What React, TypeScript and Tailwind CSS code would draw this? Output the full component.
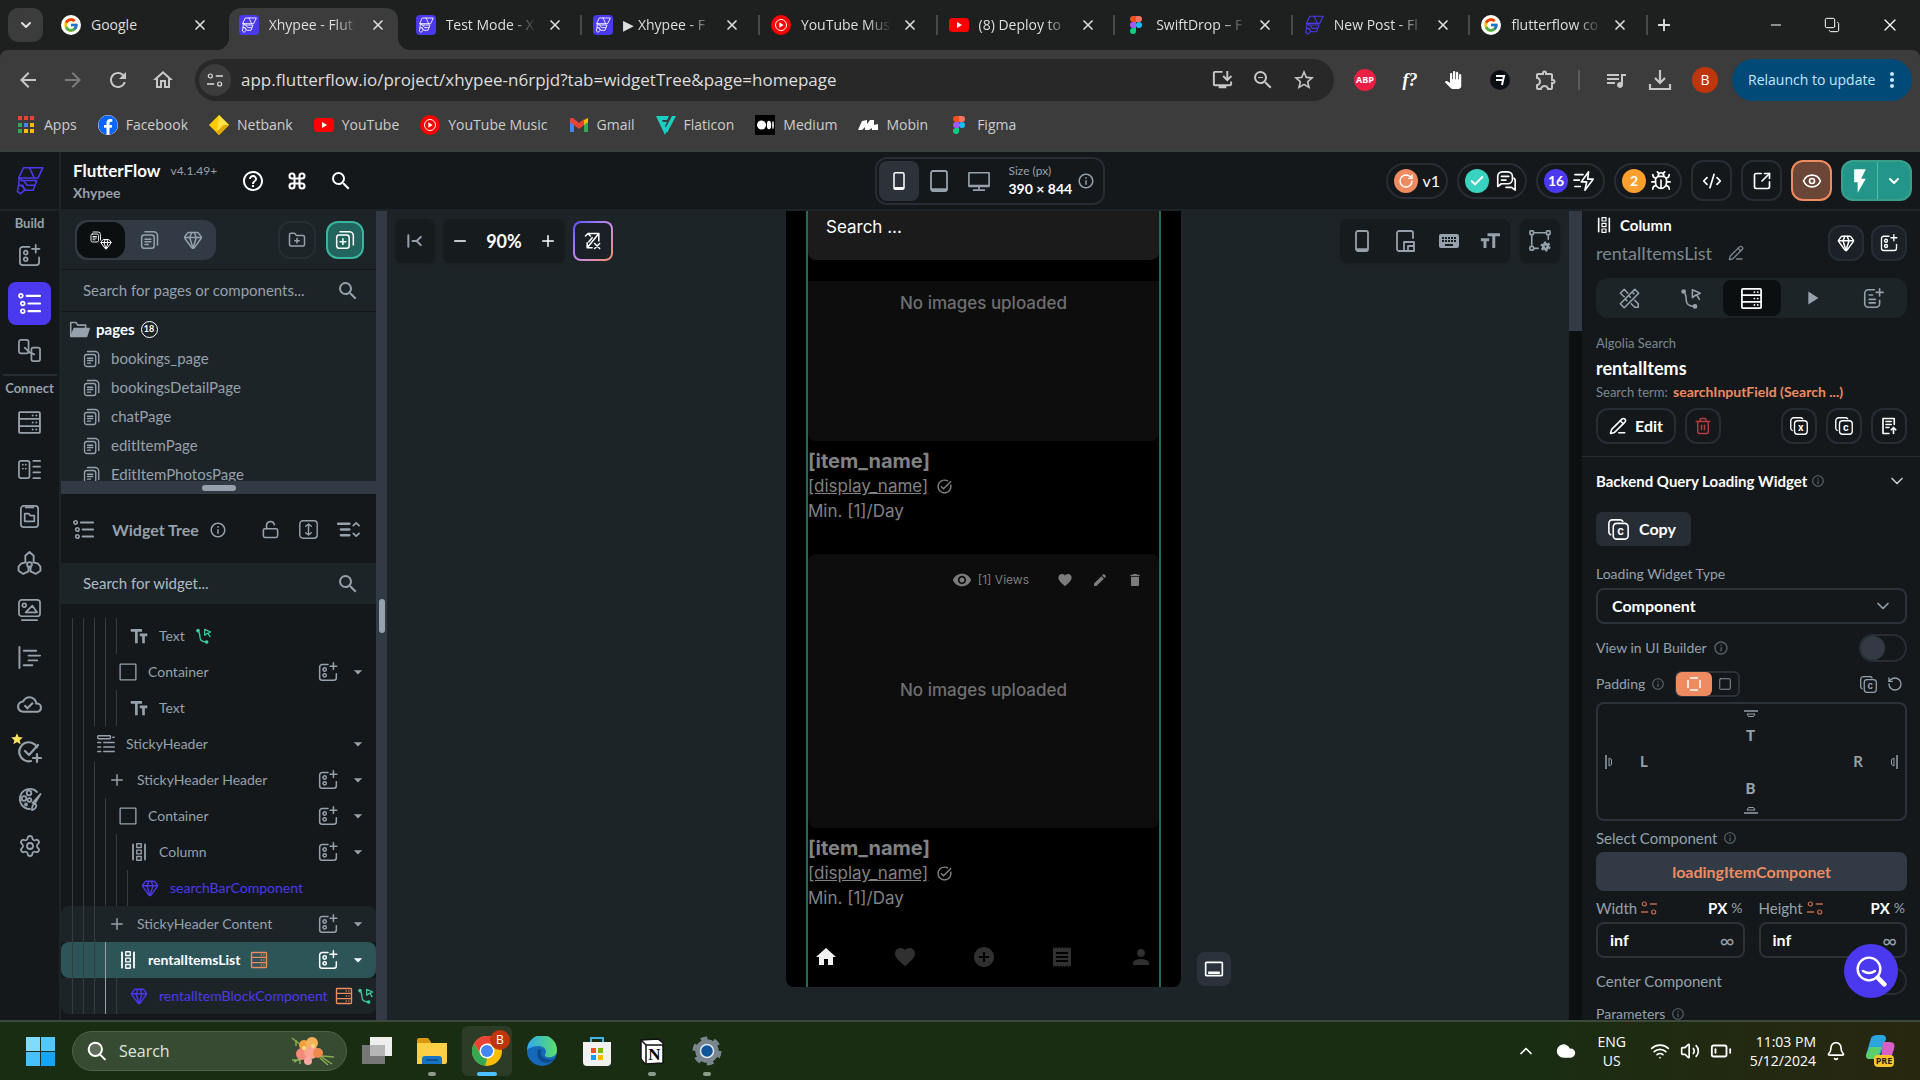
import type { ReactNode } from 'react';
import clsx from 'clsx';
import {
  BatteryLow, Bell, Bug, ChevronDown, ChevronUp, Cloud, CodeXml, Command, Copy, FolderPlus, Gem, Minus, Plus,
  RotateCcw, RotateCw, Settings, Trash2, Volume2, Wifi, X, SquareArrowOutUpRight, Eye, Check, PencilLine, LockOpen,
} from 'lucide-react';
import {
  MdAddCircle, MdArrowBack, MdArrowDropDown, MdArrowForward, MdDelete, MdEdit, MdFavorite, MdFlashOn,
  MdHelpOutline, MdHome, MdInfoOutline, MdInstallDesktop, MdKeyboard, MdMoreVert, MdOutlineCallToAction,
  MdOutlineCloudDone, MdOutlineExtension, MdOutlineHome, MdPanTool, MdPerson, MdPlayArrow, MdQueueMusic,
  MdReceipt, MdRefresh, MdSearch, MdStar, MdStarBorder, MdTaskAlt, MdVisibility, MdZoomOut,
} from 'react-icons/md';
import { FcGoogle } from 'react-icons/fc';
import { FaFacebook } from 'react-icons/fa';

type IconProps = { className?: string };

const Svg = ({ className, children }: IconProps & { children: ReactNode }) => (
  <svg
    viewBox="0 0 24 24"
    fill="none"
    stroke="currentColor"
    strokeWidth="1.8"
    strokeLinecap="round"
    strokeLinejoin="round"
    className={clsx('shrink-0', className)}
    aria-hidden="true"
  >
    {children}
  </svg>
);

const FlutterFlowMark = ({ className }: IconProps) => (
  <Svg className={className}>
    <path d="M7 1.500h16l-4 8.500H3zM12 1.500l4 8.500M5 10v2h13l-3 8H9l-4-4M7 12l3 4h6M3.500 10L3 16l-1 5 2.500 2L8 20l-1.500-4H3" strokeWidth="1.3" />
  </Svg>
);

const FlutterFlowTile = () => (
  <span className="flex size-5 items-center justify-center rounded-sm bg-[#4b39ef] text-white">
    <FlutterFlowMark className="size-4" />
  </span>
);

const PagesIcon = ({ className }: IconProps) => (
  <Svg className={className}>
    <rect x="2" y="6" width="15" height="16" rx="3" />
    <path d="M6 2h10a5 5 0 0 1 5 5v11M6 11h7M6 14h7M6 17.500h4" />
  </Svg>
);

const AddPageIcon = ({ className }: IconProps) => (
  <Svg className={className}>
    <rect x="2" y="6" width="15" height="16" rx="3" />
    <path d="M6 2h11a5 5 0 0 1 5 5v11M9.500 10.500v7M6 14h7" />
  </Svg>
);

const FolderIcon = ({ className }: IconProps) => (
  <Svg className={className}>
    <path d="M2 19V4h6l2 3h9v3" />
    <path d="M6 11h17l-3 9H2z" fill="currentColor" />
  </Svg>
);

const AddWidgetIcon = ({ className }: IconProps) => (
  <Svg className={className}>
    <path d="M12 3H5a3 3 0 0 0-3 3v13a3 3 0 0 0 3 3h14a3 3 0 0 0 3-3v-5M18.500 1v8M14.500 5h8" />
    <circle cx="8" cy="9" r="2" />
    <circle cx="8" cy="16" r="2" />
  </Svg>
);

const TreeIcon = ({ className }: IconProps) => (
  <Svg className={className}>
    <circle cx="3" cy="4" r="2" />
    <circle cx="5" cy="12" r="2" />
    <circle cx="5" cy="20" r="2" />
    <path d="M9 4h14M11 12h12M11 20h12" strokeWidth="2.200" />
  </Svg>
);

const StoryboardIcon = ({ className }: IconProps) => (
  <Svg className={className}>
    <rect x="1" y="1" width="10" height="14" rx="2" />
    <rect x="14" y="9" width="9" height="14" rx="2" />
    <path d="M7 9l5 5 5 2" />
  </Svg>
);

const DatabaseIcon = ({ className }: IconProps) => (
  <Svg className={className}>
    <rect x="2" y="2" width="20" height="20" rx="1" />
    <path d="M2 8.500h20M2 15.500h20M15 5.300h.1M18.500 5.300h.1M15 12h.1M18.500 12h.1M15 18.700h.1M18.500 18.700h.1" />
  </Svg>
);

const DataTypeIcon = ({ className }: IconProps) => (
  <Svg className={className}>
    <rect x="1" y="3" width="11" height="18" rx="2" />
    <path d="M16 3h7M16 9h7M16 15h7M16 21h7M5 7h.1M8 7h.1M5 11h.1M8 11h.1" />
  </Svg>
);

const AssetsIcon = ({ className }: IconProps) => (
  <Svg className={className}>
    <rect x="3" y="1" width="18" height="22" rx="3" />
    <path d="M8 2.500h8M7 9h4l2 2h4v6H7z" />
  </Svg>
);

const ApiIcon = ({ className }: IconProps) => (
  <Svg className={className}>
    <path d="M8 10.500V4.500L12 1l4 3.500v6M8.500 11L4 12l-2.500 3v4L6 22l5-2.500v-4M15.500 11l4.500 1 2.500 3v4L18 22l-5-2.500v-4" />
    <circle cx="12" cy="13" r="2.300" />
  </Svg>
);

const MediaIcon = ({ className }: IconProps) => (
  <Svg className={className}>
    <rect x="1" y="1" width="22" height="17" rx="3" />
    <circle cx="6.500" cy="6.500" r="2" />
    <path d="M8 14l7-7 5 7zM4 22h16" />
  </Svg>
);

const ListIcon = ({ className }: IconProps) => (
  <Svg className={className}>
    <path d="M1.500 1v22M6 5h13M11 10h12M11 15h9M6 20h9" strokeWidth="2" />
  </Svg>
);

const TestIcon = ({ className }: IconProps) => (
  <Svg className={className}>
    <path d="M13 21A9.500 9.500 0 1 1 19 7M7 11l4 4 9-10M19 14v8M15 18h8" strokeWidth="2.200" />
  </Svg>
);

const ThemeIcon = ({ className }: IconProps) => (
  <Svg className={className}>
    <path d="M12 22A10 10 0 1 1 19 5M22.500 7l-6 10-2-1zM14 23c0-4 1-6 3-6s2 5-3 6z" />
    <circle cx="11" cy="6" r="2.300" />
    <circle cx="6" cy="11.500" r="2.300" />
    <circle cx="11.500" cy="13" r="1.800" />
    <circle cx="8" cy="17.500" r="1" />
  </Svg>
);

const ActionFlowIcon = ({ className }: IconProps) => (
  <Svg className={className}>
    <circle cx="3" cy="4" r="1.800" fill="currentColor" />
    <circle cx="16" cy="21" r="1.800" fill="currentColor" />
    <path d="M3 4c3 3 3 6 3 10s3 7 10 7M13 2l9 4-4 2 3 5M13 2v9l4-3" />
  </Svg>
);

const ColumnIcon = ({ className }: IconProps) => (
  <Svg className={className}>
    <path d="M4 2v20M20 2v20" strokeWidth="2.400" />
    <rect x="9" y="1" width="6" height="5" />
    <rect x="9" y="9.500" width="6" height="5" />
    <rect x="9" y="18" width="6" height="5" />
  </Svg>
);

const StickyIcon = ({ className }: IconProps) => (
  <Svg className={className}>
    <rect x="1" y="1" width="17" height="4" rx="1" />
    <path d="M21 3h2M1 10h4M9 10h14M1 16h4M9 16h14M1 22h4M9 22h14" />
  </Svg>
);

const TextIcon = ({ className }: IconProps) => (
  <Svg className={className}>
    <path d="M1 4.500h15M8.500 4.500v17M13 10.500h10M18 10.500v11" strokeWidth="3.600" strokeLinecap="butt" />
  </Svg>
);

const TextScaleIcon = ({ className }: IconProps) => (
  <Svg className={className}>
    <path d="M9 4.500h15M16.500 4.500v16M1 10.500h10M6 10.500v10" strokeWidth="3.600" strokeLinecap="butt" />
  </Svg>
);

const BoxIcon = ({ className }: IconProps) => (
  <Svg className={className}>
    <rect x="1.500" y="1.500" width="21" height="21" rx="1" />
  </Svg>
);

const LetterCopyIcon = ({ className, letter }: IconProps & { letter: string }) => (
  <Svg className={className}>
    <rect x="6" y="5" width="17" height="18" rx="4" />
    <path d="M3 18a4 4 0 0 1-2-3V5a4 4 0 0 1 4-4h9a4 4 0 0 1 3 1.500" />
    <text x="14.500" y="18" textAnchor="middle" fontSize="13" fontWeight="700" fontFamily="Inter, sans-serif" fill="currentColor" stroke="none">
      {letter}
    </text>
  </Svg>
);

const BindIcon = ({ className }: IconProps) => (
  <Svg className={className}>
    <circle cx="5" cy="6" r="3" />
    <circle cx="19" cy="18" r="3" />
    <path d="M14 6h9M1 18h9" strokeWidth="2.200" />
  </Svg>
);

const PhoneIcon = ({ className }: IconProps) => (
  <Svg className={className}>
    <rect x="6" y="2" width="12" height="20" rx="2" />
    <path d="M7 20.500h10" strokeWidth="2.400" />
  </Svg>
);

const TabletIcon = ({ className }: IconProps) => (
  <Svg className={className}>
    <rect x="4" y="2" width="16" height="20" rx="2" />
    <path d="M5 20.500h14" strokeWidth="2.600" />
  </Svg>
);

const DesktopIcon = ({ className }: IconProps) => (
  <Svg className={className}>
    <rect x="1" y="3" width="22" height="15" />
    <path d="M2 17h20M12 18v3M6 22h12" />
  </Svg>
);

const DeviceFrameIcon = ({ className }: IconProps) => (
  <Svg className={className}>
    <path d="M10 22H6a2 2 0 0 1-2-2V4a2 2 0 0 1 2-2h12a2 2 0 0 1 2 2v5M11 22V13h10v9zM15 22v-5h6" />
  </Svg>
);

const CanvasSettingsIcon = ({ className }: IconProps) => (
  <Svg className={className}>
    <rect x="1" y="1" width="4" height="4" rx="1" />
    <rect x="19" y="1" width="4" height="4" rx="1" />
    <rect x="1" y="18" width="4" height="4" rx="1" />
    <path d="M5 3h14M3 5v13M21 5v5M5 20h5" />
    <circle cx="18" cy="18" r="4" strokeWidth="3" strokeDasharray="2.200 2" strokeLinecap="butt" />
    <circle cx="18" cy="18" r="2.500" strokeWidth="3" />
  </Svg>
);

const DocAddIcon = ({ className }: IconProps) => (
  <Svg className={className}>
    <path d="M13 2H6a4 4 0 0 0-4 4v12a4 4 0 0 0 4 4h9a4 4 0 0 0 4-4v-4M19 1v8M15 5h8M7 8h4M7 13h7M7 17h7" />
  </Svg>
);

const DocUpIcon = ({ className }: IconProps) => (
  <Svg className={className}>
    <path d="M12 22H4V2h15v8M8 6h7M8 10h7M8 14h4M18 22v-8M15 17l3-3 3 3" strokeWidth="2.200" />
  </Svg>
);

const ToolsIcon = ({ className }: IconProps) => (
  <Svg className={className}>
    <path d="M1.500 18L18 1.500 22.500 6 6 22.500zM7 12.500l2 2M11 8.500l2 2M15 4.500l2 2M10 6L6 1.500 1.500 6 6 10M18 14l4 4v4h-4l-4-4" />
  </Svg>
);

const CollapseIcon = ({ className }: IconProps) => (
  <Svg className={className}>
    <path d="M1 6h12M4 12h9M4 18h9" strokeWidth="2.400" />
    <path d="M17 8l3-3 3 3M17 16l3 3 3-3" />
  </Svg>
);

const ExpandIcon = ({ className }: IconProps) => (
  <Svg className={className}>
    <rect x="1" y="1" width="22" height="22" rx="4" />
    <path d="M12 5v14M8.500 8L12 5l3.500 3M8.500 16l3.500 3 3.500-3" />
  </Svg>
);

const CommentsIcon = ({ className }: IconProps) => (
  <Svg className={className}>
    <path d="M3 18V7a5 5 0 0 1 5-5h6a5 5 0 0 1 5 5v3a5 5 0 0 1-5 5H7zM7 7h8M7 11h5M21 9a5 5 0 0 1 1 4v9l-4-3h-6" />
  </Svg>
);

const OptimizeIcon = ({ className }: IconProps) => (
  <Svg className={className}>
    <path d="M17 2L9 13h6l-2 9 9-12h-6zM2 5h9M1 11h6M2 18h6" />
  </Svg>
);

// inset marker shown on each side of the padding editor
const InsetMark = ({ className }: IconProps) => (
  <svg viewBox="0 0 14 8" className={clsx('h-2 w-3.5 shrink-0', className)} fill="none" stroke="currentColor" aria-hidden="true">
    <path d="M0 1h14" strokeWidth="1.5" />
    <path d="M3 4h8l-1.500 2.500h-5z" />
  </svg>
);

const YouTubeIcon = () => (
  <svg viewBox="0 0 20 20" className="size-5 shrink-0" aria-hidden="true">
    <rect y="3" width="20" height="14" rx="3.500" fill="#f00" />
    <path d="M8 7l5 3-5 3z" fill="#fff" />
  </svg>
);

const YouTubeMusicIcon = () => (
  <svg viewBox="0 0 20 20" className="size-5 shrink-0" aria-hidden="true">
    <circle cx="10" cy="10" r="10" fill="#f00" />
    <circle cx="10" cy="10" r="5.500" fill="none" stroke="#fff" />
    <path d="M8.300 7.200l4.400 2.800-4.400 2.800z" fill="#fff" />
  </svg>
);

const FigmaIcon = () => (
  <svg viewBox="0 0 20 20" className="size-5 shrink-0" aria-hidden="true">
    <path d="M7 1h3v6H7a3 3 0 0 1 0-6z" fill="#f24e1e" />
    <path d="M10 1h3a3 3 0 0 1 0 6h-3z" fill="#ff7262" />
    <path d="M7 7h3v6H7a3 3 0 0 1 0-6z" fill="#a259ff" />
    <circle cx="13" cy="10" r="3" fill="#1abcfe" />
    <path d="M7 13h3v3a3 3 0 1 1-3-3z" fill="#0acf83" />
  </svg>
);

const GoogleIcon = () => (
  <span className="flex size-5 items-center justify-center rounded-full bg-white">
    <FcGoogle className="size-4" />
  </span>
);

const AppsIcon = () => (
  <svg viewBox="0 0 20 20" className="size-5 shrink-0" aria-hidden="true">
    <path d="M2 1h4v4H2zM8 1h4v4H8zM14 1h4v4h-4z" fill="#ea4335" />
    <path d="M2 8h4v4H2zM2 14h4v4H2z" fill="#34a853" />
    <path d="M8 8h4v4H8z" fill="#4285f4" />
    <path d="M14 8h4v4h-4zM8 14h4v4H8zM14 14h4v4h-4z" fill="#fbbc05" />
  </svg>
);

const NetbankIcon = () => (
  <svg viewBox="0 0 20 20" className="size-5 shrink-0" aria-hidden="true">
    <path d="M10 0l10 10-10 10L0 10z" fill="#fc0" />
    <path d="M10 0l10 10-6 0-6 9z" fill="#ffe14a" />
    <path d="M20 10L10 20l-3-3 8-7z" fill="#e0a800" />
  </svg>
);

const GmailIcon = () => (
  <svg viewBox="0 0 20 20" className="size-5 shrink-0" aria-hidden="true">
    <path d="M1 6v11h4V9z" fill="#4285f4" />
    <path d="M19 6v11h-4V9z" fill="#34a853" />
    <path d="M15 5l4-2v4l-4 3z" fill="#fbbc04" />
    <path d="M1 3l3 0 6 5 5-4v6l-5 4L1 7z" fill="#ea4335" />
  </svg>
);

const FlaticonIcon = () => (
  <svg viewBox="0 0 20 20" className="size-5 shrink-0" aria-hidden="true">
    <path d="M0 1h13l-2 4H6l1 2h4L9 11l2 4-2 5zM16 1h4L11 18l-2-4z" fill="#1bd0c2" />
  </svg>
);

const MediumIcon = () => (
  <svg viewBox="0 0 20 20" className="size-5 shrink-0" aria-hidden="true">
    <rect width="20" height="20" fill="#000" />
    <circle cx="6.500" cy="10" r="4.500" fill="#fff" />
    <ellipse cx="14" cy="10" rx="2.200" ry="4.300" fill="#fff" />
    <ellipse cx="18" cy="10" rx=".8" ry="4" fill="#fff" />
  </svg>
);

const MobinIcon = () => (
  <svg viewBox="0 0 20 20" className="size-5 shrink-0" aria-hidden="true">
    <path d="M0 15l4-9 5-1v4l3-4h4v5l4-1v6h-6v-2l-3 2H7v-3l-3 3z" fill="#fff" />
  </svg>
);

const tabs = [
  { title: 'Google', icon: <GoogleIcon /> },
  { title: 'Xhypee - Flut', icon: <FlutterFlowTile />, active: true },
  { title: 'Test Mode - X', icon: <FlutterFlowTile />, divider: true },
  { title: '▶ Xhypee - F', icon: <FlutterFlowTile />, divider: true },
  { title: 'YouTube Mus', icon: <YouTubeMusicIcon />, divider: true },
  { title: '(8) Deploy to', icon: <YouTubeIcon />, divider: true },
  { title: 'SwiftDrop – F', icon: <FigmaIcon />, divider: true },
  { title: 'New Post - Fl', icon: <FlutterFlowMark className="size-5 text-[#4b39ef]" />, divider: true },
  { title: 'flutterflow co', icon: <GoogleIcon />, divider: true },
];

const bookmarks = [
  { label: 'Apps', icon: <AppsIcon /> },
  { label: 'Facebook', icon: <FaFacebook className="size-5 rounded-full bg-white text-[#0866ff]" /> },
  { label: 'Netbank', icon: <NetbankIcon /> },
  { label: 'YouTube', icon: <YouTubeIcon /> },
  { label: 'YouTube Music', icon: <YouTubeMusicIcon /> },
  { label: 'Gmail', icon: <GmailIcon /> },
  { label: 'Flaticon', icon: <FlaticonIcon /> },
  { label: 'Medium', icon: <MediumIcon /> },
  { label: 'Mobin', icon: <MobinIcon /> },
  { label: 'Figma', icon: <FigmaIcon /> },
];

const TabStrip = () => (
  <div className="flex h-[50px] items-stretch bg-[#1e201f] pl-2 text-[#dedede]">
    <button aria-label="Search tabs" className="mr-2 flex h-[34px] w-[35px] shrink-0 items-center justify-center self-center rounded-[10px] bg-[#3c3c3c]">
      <ChevronDown className="size-4" strokeWidth={3} />
    </button>
    <div className="flex max-w-[1598px] flex-1 pt-2">
      {tabs.map((tab) => (
        <div
          key={tab.title}
          className={clsx(
            'relative flex min-w-0 items-center gap-2.5 pb-2 pl-2.5',
            tab.active
              ? 'mr-2 w-[169px] shrink-0 rounded-t-xl bg-[#3c3c3c] before:absolute before:bottom-0 before:-left-3 before:size-3 before:bg-[radial-gradient(circle_at_0_0,transparent_12px,#3c3c3c_12px)] after:absolute after:-right-3 after:bottom-0 after:size-3 after:bg-[radial-gradient(circle_at_100%_0,transparent_12px,#3c3c3c_12px)]'
              : 'flex-1',
          )}
        >
          <span className="shrink-0">{tab.icon}</span>
          <span
            className={clsx(
              'w-[91px] shrink-0 overflow-hidden text-sm whitespace-nowrap',
              tab.title !== 'Google' && '[mask-image:linear-gradient(to_right,black_72%,transparent)]',
            )}
          >
            {tab.title}
          </span>
          <button aria-label={`Close ${tab.title}`} className="shrink-0">
            <X className="size-4" strokeWidth={2.5} />
          </button>
          {tab.divider && <span className="mr-px ml-auto h-5 w-0.5 bg-[#4a4a4a]" />}
        </div>
      ))}
    </div>
    <button aria-label="New tab" className="px-1.5">
      <Plus className="size-4.5" strokeWidth={2.5} />
    </button>
    <div className="ml-auto flex items-center gap-9 pr-5 text-white">
      <button aria-label="Minimize"><Minus className="size-4" strokeWidth={1.5} /></button>
      <button aria-label="Restore" className="px-1"><Copy className="size-4 -scale-x-100 rotate-90" strokeWidth={1.5} /></button>
      <button aria-label="Close window"><X className="size-5" strokeWidth={1.5} /></button>
    </div>
  </div>
);

const AddressBar = () => (
  <div className="flex h-[59px] items-center rounded-t-lg bg-[#3c3c3c] pr-2 pl-4 text-[#c7c7c7]">
    <div className="flex items-center gap-[21px]">
      <button aria-label="Back"><MdArrowBack className="size-6" /></button>
      <button aria-label="Forward" className="text-[#7b7b7b]"><MdArrowForward className="size-6" /></button>
      <button aria-label="Reload"><MdRefresh className="size-6" /></button>
      <button aria-label="Home"><MdOutlineHome className="size-6" /></button>
    </div>
    <div className="ml-5 flex h-[42px] flex-1 items-center rounded-full bg-[#282828] pr-4.5 pl-1">
      <button aria-label="Site information" className="flex size-8 items-center justify-center rounded-full bg-[#3c3c3c] text-[#dedede]">
        <BindIcon className="size-4" />
      </button>
      <input
        aria-label="Address"
        className="ml-2.5 min-w-0 flex-1 bg-transparent text-[17px] text-[#dedede] outline-none"
        defaultValue="app.flutterflow.io/project/xhypee-n6rpjd?tab=widgetTree&page=homepage"
      />
      <div className="flex items-center gap-[17px]">
        <MdInstallDesktop className="size-[23px]" />
        <MdZoomOut className="size-6" />
        <MdStarBorder className="size-6" />
      </div>
    </div>
    <div className="ml-5 flex items-center gap-6">
      <span className="flex size-5.5 items-center justify-center rounded-full bg-[#ed1e45] text-[9px] font-bold text-white">ABP</span>
      <span className="w-5 text-center font-['Liberation_Serif',serif] text-lg font-bold text-white italic">f?</span>
      <MdPanTool className="size-4.5 text-white" />
      <svg viewBox="0 0 20 20" className="ml-1 size-5" aria-hidden="true">
        <circle cx="10" cy="10" r="10" fill="#0b0f14" />
        <path d="M6 6h8l-2 9M6 10h6" fill="none" stroke="#fff" strokeWidth="2" />
      </svg>
      <MdOutlineExtension className="size-6" />
    </div>
    <span className="mx-5 h-5 w-0.5 bg-[#5c5c5c]" />
    <MdQueueMusic className="ml-1 size-6" />
    <svg viewBox="0 0 24 24" className="ml-5 size-6" fill="none" stroke="currentColor" strokeWidth="2.2" aria-hidden="true">
      <path d="M12 2v13M7 10l5 5 5-5M2 16v5h20v-5" />
    </svg>
    <span className="ml-5 flex size-6.5 items-center justify-center rounded-full bg-[#bf360c] text-sm text-white">B</span>
    <button className="ml-3.5 flex h-[42px] w-[180px] items-center justify-between rounded-full bg-[#004a77] pr-2 pl-4 text-sm whitespace-nowrap text-[#c2e7ff]">
      Relaunch to update
      <MdMoreVert className="size-6" />
    </button>
  </div>
);

const BookmarksBar = () => (
  <nav aria-label="Bookmarks" className="flex h-[43px] items-start gap-[21px] border-b-2 border-[#3a4140] bg-[#3c3c3c] pt-1.5 pl-4 text-sm text-[#cdcdcd]">
    {bookmarks.map((b) => (
      <a key={b.label} href="#" className="flex items-center gap-2">
        {b.icon}
        {b.label}
      </a>
    ))}
  </nav>
);

const pill = 'flex h-9 items-center justify-between rounded-full border-2 border-[#262d34] px-1.5';
const square = 'flex items-center justify-center rounded-xl border-2 border-[#262d34]';

const AppHeader = () => (
  <header className="flex h-[59px] shrink-0 items-center border-b-2 border-[#1d2428] bg-[#14181b] text-white">
    <div className="flex h-full w-[61px] items-center justify-center border-r-2 border-[#1d2428]">
      <FlutterFlowMark className="size-[29px] text-[#4b39ef]" />
    </div>
    <div className="flex flex-1 items-center pl-3">
      <div>
        <p className="flex items-center gap-2.5 text-[17px] leading-6 font-bold">
          FlutterFlow <span className="text-xs font-normal text-[#95a1ac]">v4.1.49+</span>
        </p>
        <p className="text-sm leading-5 font-bold text-[#95a1ac]">Xhypee</p>
      </div>
      <div className="ml-6 flex items-center gap-[22px]">
        <button aria-label="Help"><MdHelpOutline className="size-6" /></button>
        <button aria-label="Commands"><Command className="size-5" strokeWidth={2.5} /></button>
        <button aria-label="Search"><MdSearch className="size-6" /></button>
      </div>
    </div>
    <div className="flex h-12 w-[230px] items-center rounded-xl border-2 border-[#262d34] px-0.5 text-[#95a1ac]">
      <button aria-label="Phone" className="flex h-10 w-10 items-center justify-center rounded-lg bg-[#2b323a] text-white"><PhoneIcon className="size-5" /></button>
      <button aria-label="Tablet" className="flex h-10 w-10 items-center justify-center"><TabletIcon className="size-6" /></button>
      <button aria-label="Desktop" className="flex h-10 w-10 items-center justify-center"><DesktopIcon className="size-5.5" /></button>
      <div className="ml-2.5 w-[62px]">
        <p className="text-xs leading-4">Size (px)</p>
        <p className="text-sm leading-5 font-bold whitespace-nowrap text-white">390 × 844</p>
      </div>
      <MdInfoOutline className="ml-1.5 size-4.5" />
    </div>
    <div className="flex grow basis-3.5 items-center justify-end gap-[9px] pr-2">
      <button className={clsx(pill, 'w-[62px]')}>
        <span className="flex size-6 items-center justify-center rounded-full bg-[#ee8b60]"><RotateCw className="size-4" /></span>
        <span className="text-base">v1</span>
      </button>
      <button aria-label="Comments" className={clsx(pill, 'w-[70px]')}>
        <span className="flex size-6 items-center justify-center rounded-full bg-[#39d2c0]"><Check className="size-4" strokeWidth={3} /></span>
        <CommentsIcon className="mr-0.5 size-[22px]" />
      </button>
      <button aria-label="Optimizations" className={clsx(pill, 'w-[69px]')}>
        <span className="flex size-6 items-center justify-center rounded-full bg-[#4b39ef] text-sm font-bold">16</span>
        <OptimizeIcon className="mr-0.5 size-[22px]" />
      </button>
      <button aria-label="Issues" className={clsx(pill, 'w-[68px]')}>
        <span className="flex size-6 items-center justify-center rounded-full bg-[#ff9f2d] text-sm font-bold">2</span>
        <Bug className="mr-0.5 size-[22px]" strokeWidth={1.8} />
      </button>
      <button aria-label="Developer menu" className={clsx(square, 'size-[41px]')}><CodeXml className="size-5" /></button>
      <button aria-label="Share" className={clsx(square, 'size-[41px]')}><SquareArrowOutUpRight className="size-5" /></button>
      <button aria-label="Preview" className="flex size-[41px] items-center justify-center rounded-xl border-2 border-[#ee8b60] bg-[#6b4636]"><Eye className="size-5" /></button>
      <button aria-label="Run" className="flex h-[41px] w-[71px] items-center rounded-xl border-2 border-[#39a08c] bg-[#249689]">
        <span className="flex h-full flex-1 items-center justify-center border-r border-[#4bc0ae]"><MdFlashOn className="size-7" /></span>
        <ChevronDown className="mx-2 size-4" strokeWidth={3} />
      </button>
    </div>
  </header>
);

const connectItems = [
  { label: 'Database', icon: <DatabaseIcon className="size-[25px]" /> },
  { label: 'Data types', icon: <DataTypeIcon className="size-[23px]" /> },
  { label: 'App values', icon: <AssetsIcon className="size-[23px]" /> },
  { label: 'API calls', icon: <ApiIcon className="size-[25px]" /> },
  { label: 'Media', icon: <MediaIcon className="size-[23px]" /> },
  { label: 'Functions', icon: <ListIcon className="size-[23px]" /> },
  { label: 'Cloud', icon: <MdOutlineCloudDone className="size-[25px]" /> },
  { label: 'Tests', icon: <TestIcon className="size-6" />, starred: true },
  { label: 'Theme', icon: <ThemeIcon className="size-6" /> },
  { label: 'Settings', icon: <Settings className="size-6" strokeWidth={1.8} /> },
];

const SideRail = () => (
  <nav aria-label="Tools" className="flex w-[61px] shrink-0 flex-col items-center border-r-2 border-[#1d2428] bg-[#14181b] text-[#95a1ac]">
    <p className="mt-0.5 text-[13px] leading-5 font-bold">Build</p>
    <button aria-label="Widget palette" className="mt-px flex size-[43px] items-center justify-center"><AddWidgetIcon className="size-[23px]" /></button>
    <button aria-label="Widget tree" className="mt-[5px] flex size-[43px] items-center justify-center rounded-lg bg-[#4b39ef] text-white"><TreeIcon className="size-[23px]" /></button>
    <button aria-label="Storyboard" className="mt-0.5 flex size-[47px] items-center justify-center"><StoryboardIcon className="size-[23px]" /></button>
    <hr className="w-[54px] border-t-2 border-[#262d34]" />
    <p className="mt-0.5 text-[13px] leading-[21px] font-bold">Connect</p>
    {connectItems.map((item) => (
      <button key={item.label} aria-label={item.label} className="relative flex h-[47px] w-full shrink-0 items-center justify-center">
        {item.icon}
        {item.starred && <MdStar className="absolute top-1 left-2.5 size-3.5 text-[#ffe45c]" />}
      </button>
    ))}
  </nav>
);

const pages = ['bookings_page', 'bookingsDetailPage', 'chatPage', 'editItemPage', 'EditItemPhotosPage'];

const PagesPanel = () => (
  <section className="flex h-[270px] shrink-0 flex-col overflow-hidden bg-[#1d2428] text-[15px] text-[#95a1ac]">
    <div className="flex h-[59px] shrink-0 items-center border-b border-[#14181b] pr-3 pl-3.5">
      <div className="flex h-10 w-[141px] items-center rounded-xl bg-[#323b45] p-0.5">
        <button aria-label="Pages and components" className="flex h-9 w-12 items-center justify-center rounded-xl bg-[#0b0f10] text-white">
          <PagesIcon className="mb-1.5 size-3" /><Gem className="mt-2 -ml-0.5 size-3" />
        </button>
        <button aria-label="Pages" className="flex flex-1 justify-center pl-1"><PagesIcon className="size-5" /></button>
        <button aria-label="Components" className="flex flex-1 justify-center"><Gem className="size-5" strokeWidth={1.8} /></button>
      </div>
      <button aria-label="New folder" className={clsx(square, 'ml-auto size-[38px]')}><FolderPlus className="size-4.5" /></button>
      <button aria-label="Add page" className="ml-2.5 flex size-[38px] items-center justify-center rounded-xl border-2 border-[#39b59f] bg-[#22645e] text-white">
        <AddPageIcon className="size-5" />
      </button>
    </div>
    <label className="flex h-[42px] shrink-0 items-center justify-between border-b border-[#14181b] pr-4 pl-[22px]">
      <input aria-label="Search pages" placeholder="Search for pages or components..." className="min-w-0 flex-1 bg-transparent outline-none placeholder:text-[#95a1ac]" />
      <MdSearch className="size-6" />
    </label>
    <div className="flex h-8 shrink-0 items-center gap-1.5 pt-0.5 pl-2 font-bold text-white">
      <FolderIcon className="size-[21px] text-[#95a1ac]" />
      pages
      <span className="flex size-[17px] items-center justify-center rounded-full border border-white text-[9px]">18</span>
    </div>
    <ul>
      {pages.map((page) => (
        <li key={page} className="flex h-[29px] items-center gap-2.5 pl-[22px]">
          <PagesIcon className="size-[18px]" />
          {page}
        </li>
      ))}
    </ul>
  </section>
);

type TreeNode = {
  label: string;
  depth: number;
  icon: ReactNode;
  add?: boolean;
  caret?: boolean;
  tone?: string;
  row?: string;
  extra?: ReactNode;
  guide?: number;
};

const nodes: TreeNode[] = [
  { label: 'Text', depth: 5, icon: <TextIcon className="size-[18px]" />, extra: <ActionFlowIcon className="size-4 text-[#39d2a0]" /> },
  { label: 'Container', depth: 4, icon: <BoxIcon className="size-[18px]" />, add: true, caret: true },
  { label: 'Text', depth: 5, icon: <TextIcon className="size-[18px]" /> },
  { label: 'StickyHeader', depth: 2, icon: <StickyIcon className="size-[18px]" />, caret: true },
  { label: 'StickyHeader Header', depth: 3, icon: <Plus className="size-[18px]" />, add: true, caret: true },
  { label: 'Container', depth: 4, icon: <BoxIcon className="size-[18px]" />, add: true, caret: true },
  { label: 'Column', depth: 5, icon: <ColumnIcon className="size-[18px]" />, add: true, caret: true },
  { label: 'searchBarComponent', depth: 6, icon: <Gem className="size-[18px]" strokeWidth={1.8} />, tone: 'text-[#4b39ef]' },
  { label: 'StickyHeader Content', depth: 3, icon: <Plus className="size-[18px]" />, add: true, caret: true, row: 'bg-[#1d2428] rounded-t-lg' },
  {
    label: 'rentalItemsList', depth: 4, icon: <ColumnIcon className="size-[18px]" />, add: true, caret: true, guide: 3,
    tone: 'font-bold text-white', row: 'rounded-lg bg-[#2d5558]', extra: <DatabaseIcon className="-ml-px size-[18px] text-[#ee8b60]" />,
  },
  {
    label: 'rentalItemBlockComponent', depth: 5, icon: <Gem className="size-[18px]" strokeWidth={1.8} />, guide: 3, tone: 'text-[#4b39ef]', row: 'bg-[#1d2428] rounded-b-lg',
    extra: <><DatabaseIcon className="-ml-1 size-[18px] text-[#ee8b60]" /><ActionFlowIcon className="-ml-1.5 size-4 text-[#39d2a0]" /></>,
  },
];

const WidgetTree = () => (
  <section className="flex min-h-0 flex-1 flex-col overflow-hidden text-[#95a1ac]">
    <div className="flex h-[69px] shrink-0 items-center pt-0.5 pr-4 pl-3">
      <TreeIcon className="size-[21px]" />
      <h2 className="ml-[18px] text-base font-bold">Widget Tree</h2>
      <MdInfoOutline className="ml-2.5 size-4.5" />
      <div className="ml-auto flex items-center gap-[19px]">
        <LockOpen className="size-[19px]" />
        <ExpandIcon className="size-[19px]" />
        <CollapseIcon className="size-[23px]" />
      </div>
    </div>
    <label className="flex h-[41px] shrink-0 items-center bg-[#1d2428] pr-4 pl-[22px] text-[15px]">
      <input aria-label="Search widgets" placeholder="Search for widget..." className="min-w-0 flex-1 bg-transparent outline-none placeholder:text-[#b0bac3]" />
      <MdSearch className="size-6" />
    </label>
    <ul className="pt-3.5 text-sm">
      {nodes.map((node, i) => (
        <li key={i} className={clsx('flex h-9 items-center pl-[11px]', node.caret && 'pr-2', node.row)}>
          {Array.from({ length: node.depth }, (_, d) => (
            <span key={d} className={clsx('h-full w-[11px] shrink-0 border-l', node.guide === d ? 'border-[#95a1ac]' : 'border-[#343c41]')} />
          ))}
          <span className={clsx('flex items-center gap-[11px] pl-[3px] whitespace-nowrap', node.tone)}>
            {node.icon}
            {node.label}
            {node.extra}
          </span>
          {node.caret && (
            <span className={clsx('ml-auto flex items-center gap-2.5', node.guide && 'text-white')}>
              {node.add && <AddWidgetIcon className="size-5" />}
              <MdArrowDropDown className="size-5" />
            </span>
          )}
        </li>
      ))}
    </ul>
  </section>
);

const LeftPanel = () => (
  <aside className="flex w-[326px] shrink-0">
    <div className="flex w-[315px] flex-col overflow-hidden bg-[#14181b]">
      <PagesPanel />
      <div className="flex h-[13px] shrink-0 items-center justify-center bg-[#323b45]">
        <span className="h-1.5 w-[34px] rounded-full bg-[#95a1ac]" />
      </div>
      <WidgetTree />
    </div>
    <div className="flex flex-1 items-center justify-center bg-[#323b45]">
      <span className="h-[34px] w-1.5 rounded-full bg-[#95a1ac]" />
    </div>
  </aside>
);

const ItemText = () => (
  <div className="text-[#828282]">
    <p className="text-xl leading-6 font-bold">[item_name]</p>
    <p className="flex items-center gap-2 text-[17px] leading-[26px]">
      <a href="#" className="underline">[display_name]</a>
      <MdTaskAlt className="size-[17px]" />
    </p>
    <p className="text-[17px] leading-6">Min. [1]/Day</p>
  </div>
);

const Phone = () => (
  <div className="w-[395px] self-start rounded-b-lg bg-black px-5 font-[Inter,sans-serif]">
    <div className="border-x-2 border-[#236a5a]">
      <div className="flex h-[49px] items-start rounded-b-lg bg-[#1b1b1b] px-[18px] pt-1">
        <input aria-label="Search items" placeholder="Search ..." className="w-full bg-transparent text-[17px] outline-none placeholder:text-white" />
      </div>
      <div className="mt-[21px] mb-2 flex h-40 justify-center rounded-b-lg bg-[#0d0d0d] pt-2.5 text-[17px] leading-6 font-medium text-[#6f6f6f]">
        No images uploaded
      </div>
      <ItemText />
      <div className="mt-[31px] mb-2 h-[274px] rounded-lg bg-[#0d0d0d] text-[#7c7c7c]">
        <div className="flex h-[52px] items-center justify-end pr-4 text-xs">
          <MdVisibility className="mr-1.5 size-5" />
          [1] Views
          <button aria-label="Favourite" className="ml-7"><MdFavorite className="size-4" /></button>
          <button aria-label="Edit item" className="ml-[19px]"><MdEdit className="size-4" /></button>
          <button aria-label="Delete item" className="ml-[19px]"><MdDelete className="size-4" /></button>
        </div>
        <p className="pt-[72px] text-center text-[17px] leading-6 font-medium text-[#6f6f6f]">No images uploaded</p>
      </div>
      <ItemText />
      <nav aria-label="App" className="mt-[35px] flex h-[42px] items-start justify-between px-1.5 text-[#303030]">
        <MdHome className="size-6 text-[#f1f1f1]" />
        <MdFavorite className="size-6" />
        <MdAddCircle className="size-6" />
        <MdReceipt className="size-6" />
        <MdPerson className="size-6" />
      </nav>
    </div>
  </div>
);

const tool = 'flex h-11 items-center rounded-lg bg-[#161b1e] shadow';

const Canvas = () => (
  <main className="flex min-w-0 flex-1 overflow-hidden bg-[#1d2428]">
    <div className="flex shrink grow basis-5 items-start gap-2 pt-2 pl-2 text-[#95a1ac]">
      <button aria-label="Collapse panel" className={clsx(tool, 'w-10 justify-center')}>
        <Svg className="size-5"><path d="M4 5v14M19 7l-5 5 5 5M9 12h5" strokeWidth="2.400" /></Svg>
      </button>
      <div className={clsx(tool, 'w-[122px] justify-between px-2 text-white')}>
        <button aria-label="Zoom out"><Minus className="size-4.5" /></button>
        <span className="text-lg font-bold">90%</span>
        <button aria-label="Zoom in"><Plus className="size-4.5" /></button>
      </div>
      <button aria-label="AI tools" className="mt-0.5 size-10 rounded-lg bg-linear-to-br from-[#5b4bff] via-[#c58be8] to-[#ee8b60] p-0.5 text-white">
        <span className="flex size-full items-center justify-center rounded-md bg-[#1b2026]">
          <Svg className="size-5"><path d="M6 3h13v9M19 3L5 20M5 14v6h6M3 6l3-3 3 3M14 15l6 6M20 15l-6 6M11 8l-4 5" /></Svg>
        </span>
      </button>
    </div>
    <Phone />
    <div className="flex flex-1 flex-col items-end justify-between pt-2 pr-[9px] pb-[34px] text-[#95a1ac]">
      <div className="flex gap-2.5">
        <div className={clsx(tool, 'w-[170px] justify-between px-2.5')}>
          <PhoneIcon className="size-6" />
          <DeviceFrameIcon className="size-6" />
          <MdKeyboard className="size-6" />
          <TextScaleIcon className="size-5" />
        </div>
        <button aria-label="Canvas settings" className={clsx(tool, 'w-10 justify-center')}><CanvasSettingsIcon className="size-5.5" /></button>
      </div>
      <button aria-label="Toggle nav bar" className="ml-4 flex size-[34px] items-center justify-center self-start rounded-lg bg-[#2b323b] text-white">
        <MdOutlineCallToAction className="size-5" />
      </button>
    </div>
  </main>
);

const label = 'flex items-center leading-5 text-[#95a1ac]';
const field = 'flex h-9 items-center rounded-lg border-2 border-[#2b323a] font-bold text-white';

const SizeField = ({ name }: { name: string }) => (
  <div className="flex-1">
    <div className="mb-1 flex items-center text-[15px] leading-5 text-[#95a1ac]">
      <label htmlFor={name}>{name}</label>
      <BindIcon className="ml-1 size-4 text-[#c06a4a]" />
      <span className="ml-auto font-bold text-white">PX</span>
      <span className="mr-0.5 ml-1 text-sm">%</span>
    </div>
    <div className={clsx(field, 'pr-2 pl-3')}>
      <input id={name} defaultValue="inf" className="w-full min-w-0 bg-transparent text-base outline-none" />
      <span className="text-xl leading-5 font-normal text-[#95a1ac]">∞</span>
    </div>
  </div>
);

const Toggle = ({ id }: { id: string }) => (
  <input
    id={id}
    type="checkbox"
    className="ml-auto h-7 w-12 appearance-none rounded-full border-2 border-[#262d34] before:block before:size-6 before:rounded-full before:bg-[#323b45]"
  />
);

const Inspector = () => (
  <aside className="flex w-[351px] shrink-0">
    <div className="flex w-[13px] flex-col bg-[#0c1011]">
      <span className="h-[120px] bg-[#323b45]" />
    </div>
    <div className="flex flex-1 flex-col overflow-hidden bg-[#14181b] pr-[13px] pl-[14px]">
      <div className="flex shrink-0 items-start pt-0.5">
        <div className="flex-1">
          <p className="flex items-center gap-2 text-[15px] leading-6 font-bold text-white"><ColumnIcon className="size-4" />Column</p>
          <p className="flex items-center gap-4 pt-1 text-lg leading-6 text-[#7c8791]">rentalItemsList <PencilLine className="size-4" /></p>
        </div>
        <div className="flex gap-[7px] pt-3 text-white">
          <button aria-label="Create component" className={clsx(square, 'size-9 bg-[#1b2126]')}><Gem className="size-[18px]" /></button>
          <button aria-label="Add child" className={clsx(square, 'size-9 bg-[#1b2126]')}><AddWidgetIcon className="size-[18px]" /></button>
        </div>
      </div>
      <div className="mt-[13px] flex h-10 shrink-0 items-center rounded-xl bg-[#1d2428] p-0.5 text-[#95a1ac]">
        <button aria-label="Properties" className="flex flex-1 justify-center"><ToolsIcon className="size-[21px]" /></button>
        <button aria-label="Actions" className="flex flex-1 justify-center"><ActionFlowIcon className="size-[21px]" /></button>
        <button aria-label="Backend query" className="flex h-9 w-[58px] items-center justify-center rounded-lg bg-[#0b0f10] text-white"><DatabaseIcon className="size-[23px]" /></button>
        <button aria-label="Animations" className="flex flex-1 justify-center"><MdPlayArrow className="size-[22px]" /></button>
        <button aria-label="Notes" className="flex flex-1 justify-center"><DocAddIcon className="size-[21px]" /></button>
      </div>
      <p className="mt-4 text-[13px] leading-4.5 text-[#7c8791]">Algolia Search</p>
      <p className="mt-1 text-lg leading-6 font-bold text-white">rentalItems</p>
      <p className="mt-0.5 text-[13px] leading-5 text-[#7c8791]">Search term: <span className="ml-0.5 text-sm font-bold text-[#ee8b60]">searchInputField (Search ...)</span></p>
      <div className="mt-1.5 flex shrink-0 gap-[9px] text-white">
        <button className={clsx(square, 'h-9 w-20 gap-2 text-base font-bold')}><PencilLine className="size-[18px]" />Edit</button>
        <button aria-label="Delete query" className={clsx(square, 'mr-auto size-9 text-[#b53a40]')}><Trash2 className="size-[18px]" /></button>
        <button aria-label="Cut" className={clsx(square, 'size-9')}><LetterCopyIcon letter="x" className="size-[18px]" /></button>
        <button aria-label="Copy query" className={clsx(square, 'size-9')}><LetterCopyIcon letter="c" className="size-[18px]" /></button>
        <button aria-label="Paste" className={clsx(square, 'size-9')}><DocUpIcon className="size-[18px]" /></button>
      </div>
      <hr className="-mx-3.5 mt-3 border-[#262d34]" />
      <h3 className="mt-3 flex items-center text-[15px] leading-6 font-bold whitespace-nowrap text-white">
        Backend Query Loading Widget
        <MdInfoOutline className="ml-1 size-3.5 text-[#57636c]" />
        <ChevronDown className="ml-auto size-5 text-[#c0c8d0]" />
      </h3>
      <button className="mt-[19px] flex h-[34px] w-[95px] shrink-0 items-center gap-2.5 rounded-md bg-[#262d34] pl-3 text-base font-bold text-white">
        <LetterCopyIcon letter="c" className="size-[21px]" />Copy
      </button>
      <label htmlFor="widget-type" className={clsx(label, 'mt-[18px] text-sm')}>Loading Widget Type</label>
      <div className={clsx(field, 'mt-1 shrink-0 pr-3 pl-3.5')}>
        <select id="widget-type" className="flex-1 appearance-none bg-transparent text-base outline-none">
          <option>Component</option>
        </select>
        <ChevronDown className="size-5 text-[#95a1ac]" />
      </div>
      <div className="mt-[9px] flex h-[30px] shrink-0 items-center">
        <label htmlFor="ui-builder" className={clsx(label, 'text-sm')}>View in UI Builder</label>
        <MdInfoOutline className="ml-1.5 size-4 text-[#57636c]" />
        <Toggle id="ui-builder" />
      </div>
      <div className="mt-2 flex h-[26px] shrink-0 items-center text-sm text-[#95a1ac]">
        Padding
        <MdInfoOutline className="mr-2.5 ml-1.5 size-3.5 text-[#57636c]" />
        <div className="flex h-[26px] w-[65px] items-center rounded-md border-2 border-[#2b323a]">
          <button aria-label="All sides" className="-m-px flex h-6 w-9 items-center justify-center rounded-md bg-[#ee8b60] text-white">
            <svg viewBox="0 0 14 14" className="size-3.5" fill="none" stroke="currentColor" strokeWidth="1.5" aria-hidden="true">
              <path d="M3 1h8M3 13h8M1 3v8M13 3v8" />
            </svg>
          </button>
          <button aria-label="One value" className="flex flex-1 justify-center"><BoxIcon className="size-3" /></button>
        </div>
        <LetterCopyIcon letter="c" className="ml-auto size-[17px]" />
        <RotateCcw className="mr-1 ml-2.5 size-4" />
      </div>
      <div className="mt-[5px] grid h-[119px] shrink-0 grid-cols-[auto_1fr_auto] items-center rounded-lg border-2 border-[#2b323a] px-1 text-[15px] font-bold text-[#95a1ac]">
        <span className="flex items-center gap-6"><InsetMark className="-rotate-90" />L</span>
        <span className="flex h-[104px] flex-col items-center justify-between">
          <InsetMark />
          <span className="flex flex-col gap-[31px] text-center"><b>T</b><b>B</b></span>
          <InsetMark className="rotate-180" />
        </span>
        <span className="flex items-center gap-6">R<InsetMark className="rotate-90" /></span>
      </div>
      <p className={clsx(label, 'mt-[7px] text-[15px]')}>Select Component <MdInfoOutline className="ml-1.5 size-3.5 text-[#57636c]" /></p>
      <button className="mt-1 h-[39px] shrink-0 rounded-lg bg-[#323b45] text-base font-bold text-[#ee8b60]">loadingItemComponet</button>
      <div className="mt-[7px] flex shrink-0 gap-[14px]">
        <SizeField name="Width" />
        <SizeField name="Height" />
      </div>
      <div className="mt-[9px] flex h-7 shrink-0 items-center">
        <label htmlFor="center-component" className={clsx(label, 'text-[15px]')}>Center Component</label>
        <Toggle id="center-component" />
      </div>
      <p className={clsx(label, 'mt-[9px] shrink-0 text-sm')}>Parameters <MdInfoOutline className="ml-1.5 size-3.5 text-[#57636c]" /></p>
    </div>
  </aside>
);

const ChromeIcon = () => (
  <svg viewBox="0 0 30 30" className="size-[30px]" aria-hidden="true">
    <circle cx="15" cy="15" r="15" fill="#fbbc04" />
    <path d="M2 7.500A15 15 0 0 1 28 7.500H15L9 19z" fill="#ea4335" />
    <path d="M2 7.500l6.500 11.300L15 22.500 13 30A15 15 0 0 1 2 7.500z" fill="#34a853" />
    <circle cx="15" cy="15" r="7.500" fill="#fff" />
    <circle cx="15" cy="15" r="6" fill="#4285f4" />
  </svg>
);

const taskbarApps = [
  {
    name: 'Task view',
    icon: (
      <svg viewBox="0 0 30 30" className="size-[30px]" aria-hidden="true">
        <path d="M0 9h23v19H0z" fill="#777" /><path d="M8 1h22v19H8z" fill="#eee" /><path d="M8 9h15v11H8z" fill="#b5b5b5" />
      </svg>
    ),
  },
  {
    name: 'File Explorer', open: true,
    icon: (
      <svg viewBox="0 0 30 30" className="size-[30px]" aria-hidden="true">
        <path d="M0 4a2 2 0 0 1 2-2h9l3 4v6H0z" fill="#d99a10" /><path d="M0 7h30v19a2 2 0 0 1-2 2H0z" fill="#ffcf45" />
        <path d="M5 28v-5a3 3 0 0 1 3-3h14a3 3 0 0 1 3 3v5z" fill="#1673c5" /><path d="M9 24h12" stroke="#0b4a86" strokeWidth="1.500" />
      </svg>
    ),
  },
  { name: 'Chrome', active: true, icon: <ChromeIcon /> },
  {
    name: 'Edge',
    icon: (
      <svg viewBox="0 0 30 30" className="size-[30px]" aria-hidden="true">
        <defs>
          <linearGradient id="edge-top" x1="0" x2="1"><stop stopColor="#2fa8ee" /><stop offset="1" stopColor="#5be06a" /></linearGradient>
        </defs>
        <circle cx="15" cy="15" r="15" fill="#1668b8" />
        <path d="M0 14A15 15 0 0 1 30 14c0 6-5 8-10 7-3-1-2-3-1-5 0-4-4-6-8-6-6 0-10 3-11 4z" fill="url(#edge-top)" />
        <path d="M11 14c-3 8 4 15 12 12l6-4c-3 2-8 2-12 0-4-3-4-6-2-9z" fill="#0f4a8a" />
      </svg>
    ),
  },
  {
    name: 'Store',
    icon: (
      <svg viewBox="0 0 30 30" className="size-[30px]" aria-hidden="true">
        <path d="M9 8V2h12v6" fill="none" stroke="#3fb5e8" strokeWidth="2" /><path d="M1 6h28v20a4 4 0 0 1-4 4H5a4 4 0 0 1-4-4z" fill="#f1f1f1" />
        <path d="M9 12h5v5H9z" fill="#f25022" /><path d="M16 12h5v5h-5z" fill="#7fba00" /><path d="M9 19h5v5H9z" fill="#00a4ef" /><path d="M16 19h5v5h-5z" fill="#ffb900" />
      </svg>
    ),
  },
  {
    name: 'Notion', open: true,
    icon: (
      <svg viewBox="0 0 30 30" className="size-[30px]" aria-hidden="true">
        <path d="M4 4l17-1 5 4v20l-18 1-4-5z" fill="#fff" stroke="#111" strokeWidth="1.500" /><path d="M4 4l5 5h17M9 9v19" fill="none" stroke="#111" strokeWidth="1.500" />
        <text x="17.500" y="24" textAnchor="middle" fontFamily="Liberation Serif, serif" fontWeight="700" fontSize="17">N</text>
      </svg>
    ),
  },
  {
    name: 'Settings', open: true,
    icon: (
      <svg viewBox="0 0 30 30" className="size-[30px]" aria-hidden="true">
        <circle cx="15" cy="15" r="11.500" fill="#7b858e" stroke="#7b858e" strokeWidth="6" strokeDasharray="6 6.040" />
        <circle cx="15" cy="15" r="11.500" fill="#7b858e" /><circle cx="15" cy="15" r="6.500" fill="#0f559c" stroke="#dfe7ee" strokeWidth="1.500" />
      </svg>
    ),
  },
];

const Taskbar = () => (
  <footer className="flex h-[60px] shrink-0 items-center border-t-2 border-[#3b4a3a] bg-linear-to-r from-[#192d12] from-80% to-[#28260f] pr-6 pl-[26px] font-['Open_Sans',sans-serif] text-white">
    <button aria-label="Start">
      <svg viewBox="0 0 29 29" className="size-[29px]" aria-hidden="true">
        <path d="M0 0h14v14H0z" fill="#7fdcff" /><path d="M15 0h14v14H15z" fill="#55c8fb" /><path d="M0 15h14v14H0z" fill="#48c1fa" /><path d="M15 15h14v14H15z" fill="#16a5f5" />
      </svg>
    </button>
    <label className="ml-[17px] flex h-10 w-[275px] items-center rounded-full border border-[#4f6348] bg-[#374b32] pr-3 pl-3.5">
      <Svg className="size-5"><circle cx="10" cy="10" r="8" fill="#5d6d59" strokeWidth="2.400" /><path d="M15.500 16l6 6" strokeWidth="2.400" /></Svg>
      <input aria-label="Search Windows" placeholder="Search" className="ml-3 min-w-0 flex-1 bg-transparent text-base outline-none placeholder:text-[#e0e6de]" />
      <svg viewBox="0 0 44 30" className="h-[30px] w-11" aria-hidden="true">
        <path d="M2 2l10 8M4 26l10-6M6 4v6M2 24h8M10 28v-6M30 20l12 8M30 22l8 7M32 20l12 1" stroke="#86ad4e" strokeWidth="1.500" />
        <circle cx="14" cy="9" r="5" fill="#f0a23c" /><circle cx="22" cy="7" r="6" fill="#f5b45a" /><circle cx="12" cy="18" r="6" fill="#f58a7c" />
        <circle cx="21" cy="16" r="7" fill="#f9a58f" /><circle cx="28" cy="17" r="5" fill="#ef8a4c" /><circle cx="18" cy="25" r="4" fill="#f6a9a0" />
        <circle cx="14" cy="12" r="2" fill="#ffe07a" /><circle cx="23" cy="10" r="2" fill="#ffd97a" />
      </svg>
    </label>
    <div className="ml-[5px] flex gap-[5px]">
      {taskbarApps.map((app) => (
        <button
          key={app.name}
          aria-label={app.name}
          className={clsx('relative flex h-[50px] w-[50px] items-center justify-center rounded-md', app.active && 'bg-[#2d3c27]')}
        >
          {app.icon}
          {app.active && <span className="absolute top-1 right-0.5 flex size-5 items-center justify-center rounded-full bg-[#bf360c] text-xs">B</span>}
          {app.active && <span className="absolute bottom-0 h-1 w-5 rounded-full bg-[#4cc2ff]" />}
          {app.open && <span className="absolute bottom-0 h-1 w-2 rounded-full bg-[#8f9a8b]" />}
        </button>
      ))}
    </div>
    <div className="ml-auto flex items-center">
      <ChevronUp className="size-5" />
      <Cloud className="ml-5 size-5" fill="#fff" />
      <p className="ml-4 w-10 text-center text-sm leading-[19px]">ENG US</p>
      <Wifi className="ml-4.5 size-5" />
      <Volume2 className="ml-2.5 size-5" />
      <BatteryLow className="ml-2.5 size-5.5" />
      <p className="ml-4.5 text-right text-sm leading-[19px]">11:03 PM<br />5/12/2024</p>
      <Bell className="ml-2.5 size-5" />
      <span className="relative ml-5 flex h-8 w-[30px] items-end justify-center">
        <svg viewBox="0 0 30 30" className="absolute inset-0 size-[30px]" aria-hidden="true">
          <path d="M5 3q2-3 6-3h5q4 0 4 4l-6 16q-2 4-6 4H3q-3 0-3-4z" fill="#2aa5e0" />
          <path d="M4 12l-4 8q0 4 3 4h5q3 0 5-5l3-7z" fill="#5bd06a" /><path d="M17 7h7q6 0 4 7l-3 9q-2 4-6 4h-8q3-1 4-5z" fill="#d85fc6" />
        </svg>
        <span className="relative ml-1.5 rounded bg-[#f7c52b] px-0.5 text-[9px] leading-3 font-bold text-[#222]">PRE</span>
      </span>
    </div>
  </footer>
);

export default function App() {
  return (
    <div className="relative flex h-screen flex-col overflow-hidden bg-[#14181b] font-[Lato,sans-serif]">
      <div className="shrink-0 bg-[#1e201f] font-['Open_Sans',sans-serif]">
        <TabStrip />
        <AddressBar />
        <BookmarksBar />
      </div>
      <AppHeader />
      <div className="flex min-h-0 flex-1">
        <SideRail />
        <LeftPanel />
        <Canvas />
        <Inspector />
      </div>
      <Taskbar />
      <button aria-label="Open search assistant" className="absolute right-[22px] bottom-[82px] flex size-[54px] items-center justify-center rounded-full bg-[#4b39ef] text-white">
        <Svg className="size-8"><circle cx="10.500" cy="10.500" r="8.500" /><path d="M6 12q4.500 3 9 0" /><path d="M17 17l5 5" strokeWidth="3.400" /></Svg>
      </button>
    </div>
  );
}
